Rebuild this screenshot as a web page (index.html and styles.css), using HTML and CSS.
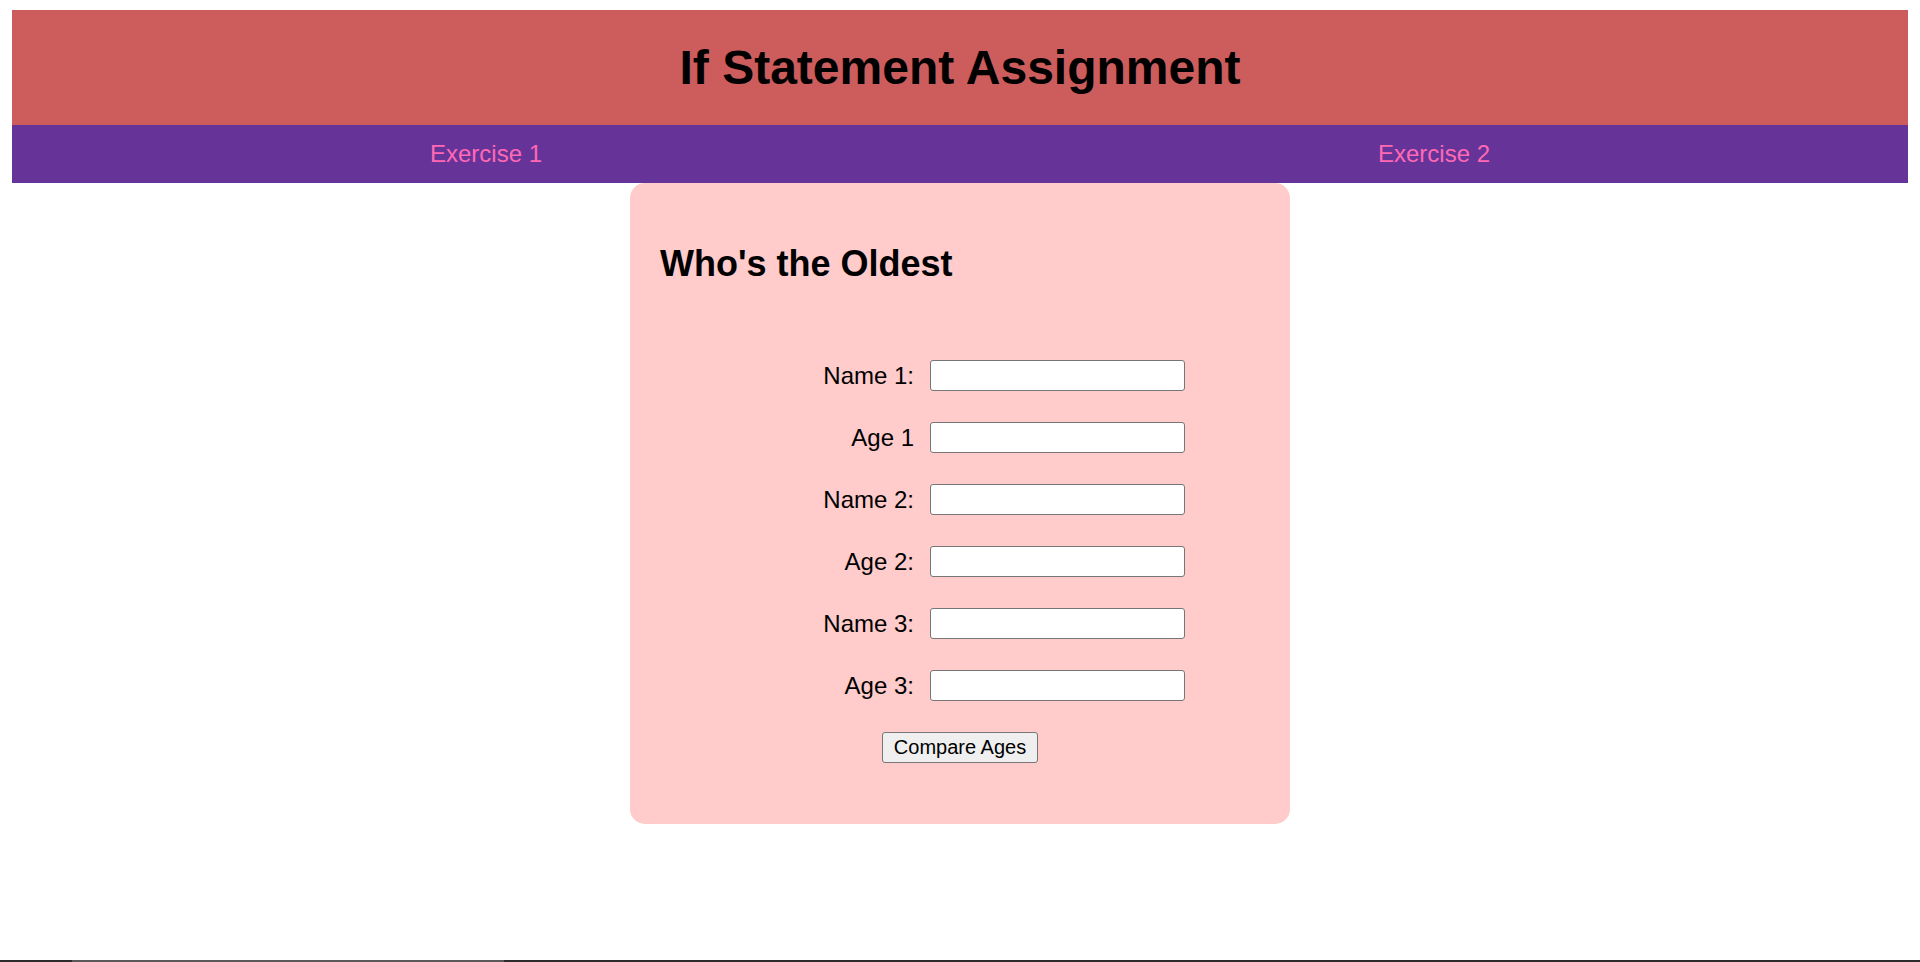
FILE: index.html
```html
<!DOCTYPE html>
<html lang="en">
<head>
<meta charset="utf-8">
<title>If Statement Assignment</title>
<link rel="stylesheet" href="styles.css">
</head>
<body>
  <header class="site-header">
    <h1 class="site-title">If Statement Assignment</h1>
  </header>
  <nav class="site-nav">
    <a class="nav-link" href="#">Exercise 1</a>
    <a class="nav-link" href="#">Exercise 2</a>
  </nav>
  <main class="card">
    <h2 class="card-title">Who's the Oldest</h2>
    <form class="age-form">
      <div class="form-row"><label class="form-label" for="n1">Name 1:</label><input class="form-input" id="n1" type="text"></div>
      <div class="form-row"><label class="form-label" for="a1">Age 1</label><input class="form-input" id="a1" type="text"></div>
      <div class="form-row"><label class="form-label" for="n2">Name 2:</label><input class="form-input" id="n2" type="text"></div>
      <div class="form-row"><label class="form-label" for="a2">Age 2:</label><input class="form-input" id="a2" type="text"></div>
      <div class="form-row"><label class="form-label" for="n3">Name 3:</label><input class="form-input" id="n3" type="text"></div>
      <div class="form-row"><label class="form-label" for="a3">Age 3:</label><input class="form-input" id="a3" type="text"></div>
      <div class="form-actions"><button class="compare-btn" type="button">Compare Ages</button></div>
    </form>
  </main>
  <div class="scrollbar"><span class="scrollbar-thumb"></span></div>
</body>
</html>
```

FILE: styles.css
```css
html, body {
  height: 100%;
}
body {
  margin: 10px 12px 0;
  font-family: "Liberation Sans", Arial, sans-serif;
  background: #ffffff;
  color: #000000;
  overflow: hidden;
}
.site-header {
  background: #cd5c5c;
  padding: 30px 0;
}
.site-title {
  margin: 0;
  font-size: 48px;
  font-weight: bold;
  text-align: center;
  line-height: normal;
}
.site-nav {
  background: #663399;
  display: flex;
  padding: 15px 0;
}
.nav-link {
  flex: 1;
  text-align: center;
  font-size: 24px;
  color: #ff69b4;
  text-decoration: none;
  line-height: normal;
}
.card {
  display: block;
  box-sizing: border-box;
  width: 660px;
  margin: 0 auto;
  background: #ffcbcb;
  border-radius: 15px;
  padding: 30px 30px 30px;
}
.card-title {
  margin: 30px 0;
  font-size: 36px;
  font-weight: bold;
  line-height: normal;
}
.age-form {
  display: flex;
  flex-direction: column;
  gap: 31px;
  padding-top: 45px;
  margin-bottom: 31px;
}
.form-row {
  display: flex;
  align-items: center;
  justify-content: center;
  gap: 16px;
  margin-left: -30px;
  margin-right: -30px;
}
.form-label {
  width: 179px;
  text-align: right;
  font-size: 24px;
  line-height: normal;
}
.form-input {
  box-sizing: border-box;
  width: 255px;
  height: 31px;
  margin: 0;
  border: 1px solid #767676;
  border-radius: 3px;
  background: #ffffff;
  font-size: 20px;
  padding: 0 3px;
}
.form-actions {
  display: flex;
  justify-content: center;
}
.compare-btn {
  box-sizing: border-box;
  height: 31px;
  margin: 0;
  padding: 0 11px;
  border: 1px solid #767676;
  border-radius: 3px;
  background: #efefef;
  color: #000000;
  font-family: "Liberation Sans", Arial, sans-serif;
  font-size: 20px;
}
.scrollbar {
  position: fixed;
  left: 0;
  right: 0;
  bottom: 0;
  height: 2px;
  background: #2b2b2b;
}
.scrollbar-thumb {
  position: absolute;
  left: 72px;
  width: 432px;
  top: 0;
  bottom: 0;
  background: #5a5a5a;
}
```
